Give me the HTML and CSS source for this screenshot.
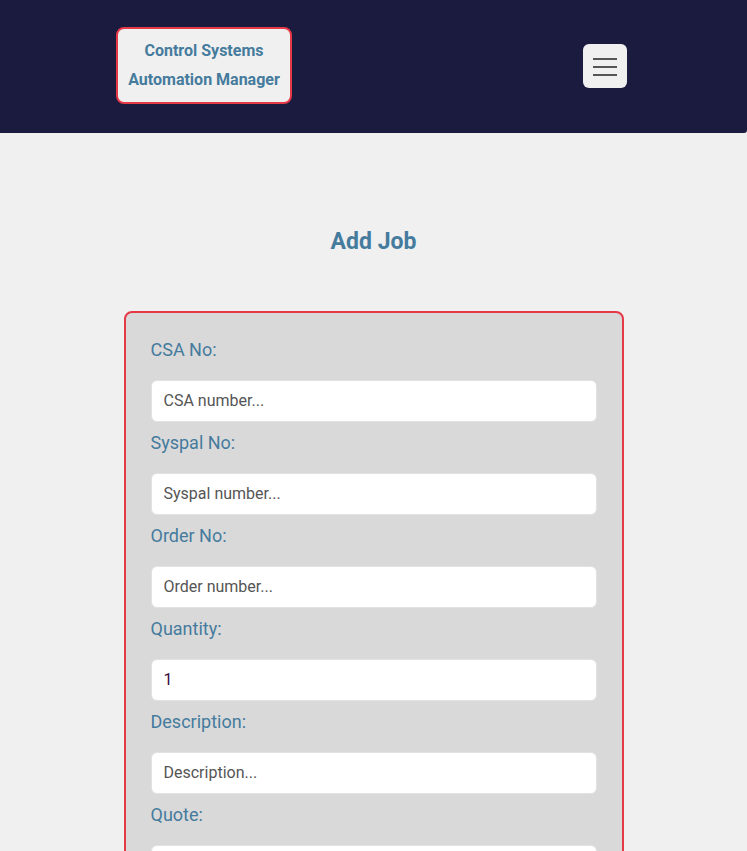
FILE: index.html
```html
<!DOCTYPE html>
<html lang="en">
<head>
<meta charset="utf-8">
<title>Add Job</title>
<link rel="stylesheet" href="styles.css">
</head>
<body>
<header class="topbar">
  <a class="brand" href="#">Control Systems<br>Automation Manager</a>
  <button class="menu-btn" type="button" aria-label="Menu">
    <svg width="24" height="20" viewBox="0 0 24 20"><path d="M0 3h24M0 11h24M0 19h24" stroke="#555" stroke-width="2"/></svg>
  </button>
</header>
<main class="content">
  <h1 class="title">Add Job</h1>
  <form class="card">
    <label class="field-label">CSA No:</label>
    <input class="field" type="text" placeholder="CSA number...">
    <label class="field-label">Syspal No:</label>
    <input class="field" type="text" placeholder="Syspal number...">
    <label class="field-label">Order No:</label>
    <input class="field" type="text" placeholder="Order number...">
    <label class="field-label">Quantity:</label>
    <input class="field value" type="text" value="1">
    <label class="field-label">Description:</label>
    <input class="field" type="text" placeholder="Description...">
    <label class="field-label">Quote:</label>
    <input class="field" type="text" placeholder="Quote...">
  </form>
</main>
</body>
</html>
```
FILE: styles.css
```css
* { box-sizing: border-box; }
html, body { margin: 0; padding: 0; }
body {
  background: #f0f0f0;
  font-family: Roboto, "Liberation Sans", sans-serif;
}
.topbar {
  height: 133px;
  background: #1b1a3f;
  border-bottom-right-radius: 3px;
  display: flex;
  align-items: center;
  justify-content: space-between;
  padding: 0 120px 2px 116px;
}
.brand {
  display: block;
  width: 176px;
  height: 77px;
  padding: 7px 0;
  background: #f0f0f0;
  border: 2px solid #e63946;
  border-radius: 8px;
  color: #457b9d;
  font-weight: 700;
  font-size: 16px;
  line-height: 29px;
  text-align: center;
  text-decoration: none;
}
.menu-btn {
  width: 44px;
  height: 44px;
  margin-top: 1px;
  background: #f0f0f0;
  border: none;
  border-radius: 6px;
  display: flex;
  align-items: center;
  justify-content: center;
  padding: 0;
}
.content {
  display: flex;
  flex-direction: column;
  align-items: center;
}
.title {
  margin: 94px 0 0;
  height: 30px;
  line-height: 30px;
  font-size: 23px;
  font-weight: 700;
  color: #457b9d;
}
.card {
  margin-top: 54px;
  width: 500px;
  background: #d9d9d9;
  border: 2px solid #e63946;
  border-radius: 8px;
  padding: 16px 25px 40px;
  display: flex;
  flex-direction: column;
}
.field-label {
  display: block;
  margin-top: 9px;
  height: 24px;
  line-height: 24px;
  margin-bottom: 18px;
  font-size: 18px;
  color: #457b9d;
}
.field {
  display: block;
  width: 100%;
  height: 42px;
  padding: 0 12px 1px;
  background: #fff;
  border: 1px solid #e2e2e2;
  border-radius: 6px;
  font-family: Roboto, "Liberation Sans", sans-serif;
  font-size: 16px;
  color: #3a0b3f;
}
.field::placeholder { color: #555; opacity: 1; }
.field.value { color: #3a0b3f; }
```
